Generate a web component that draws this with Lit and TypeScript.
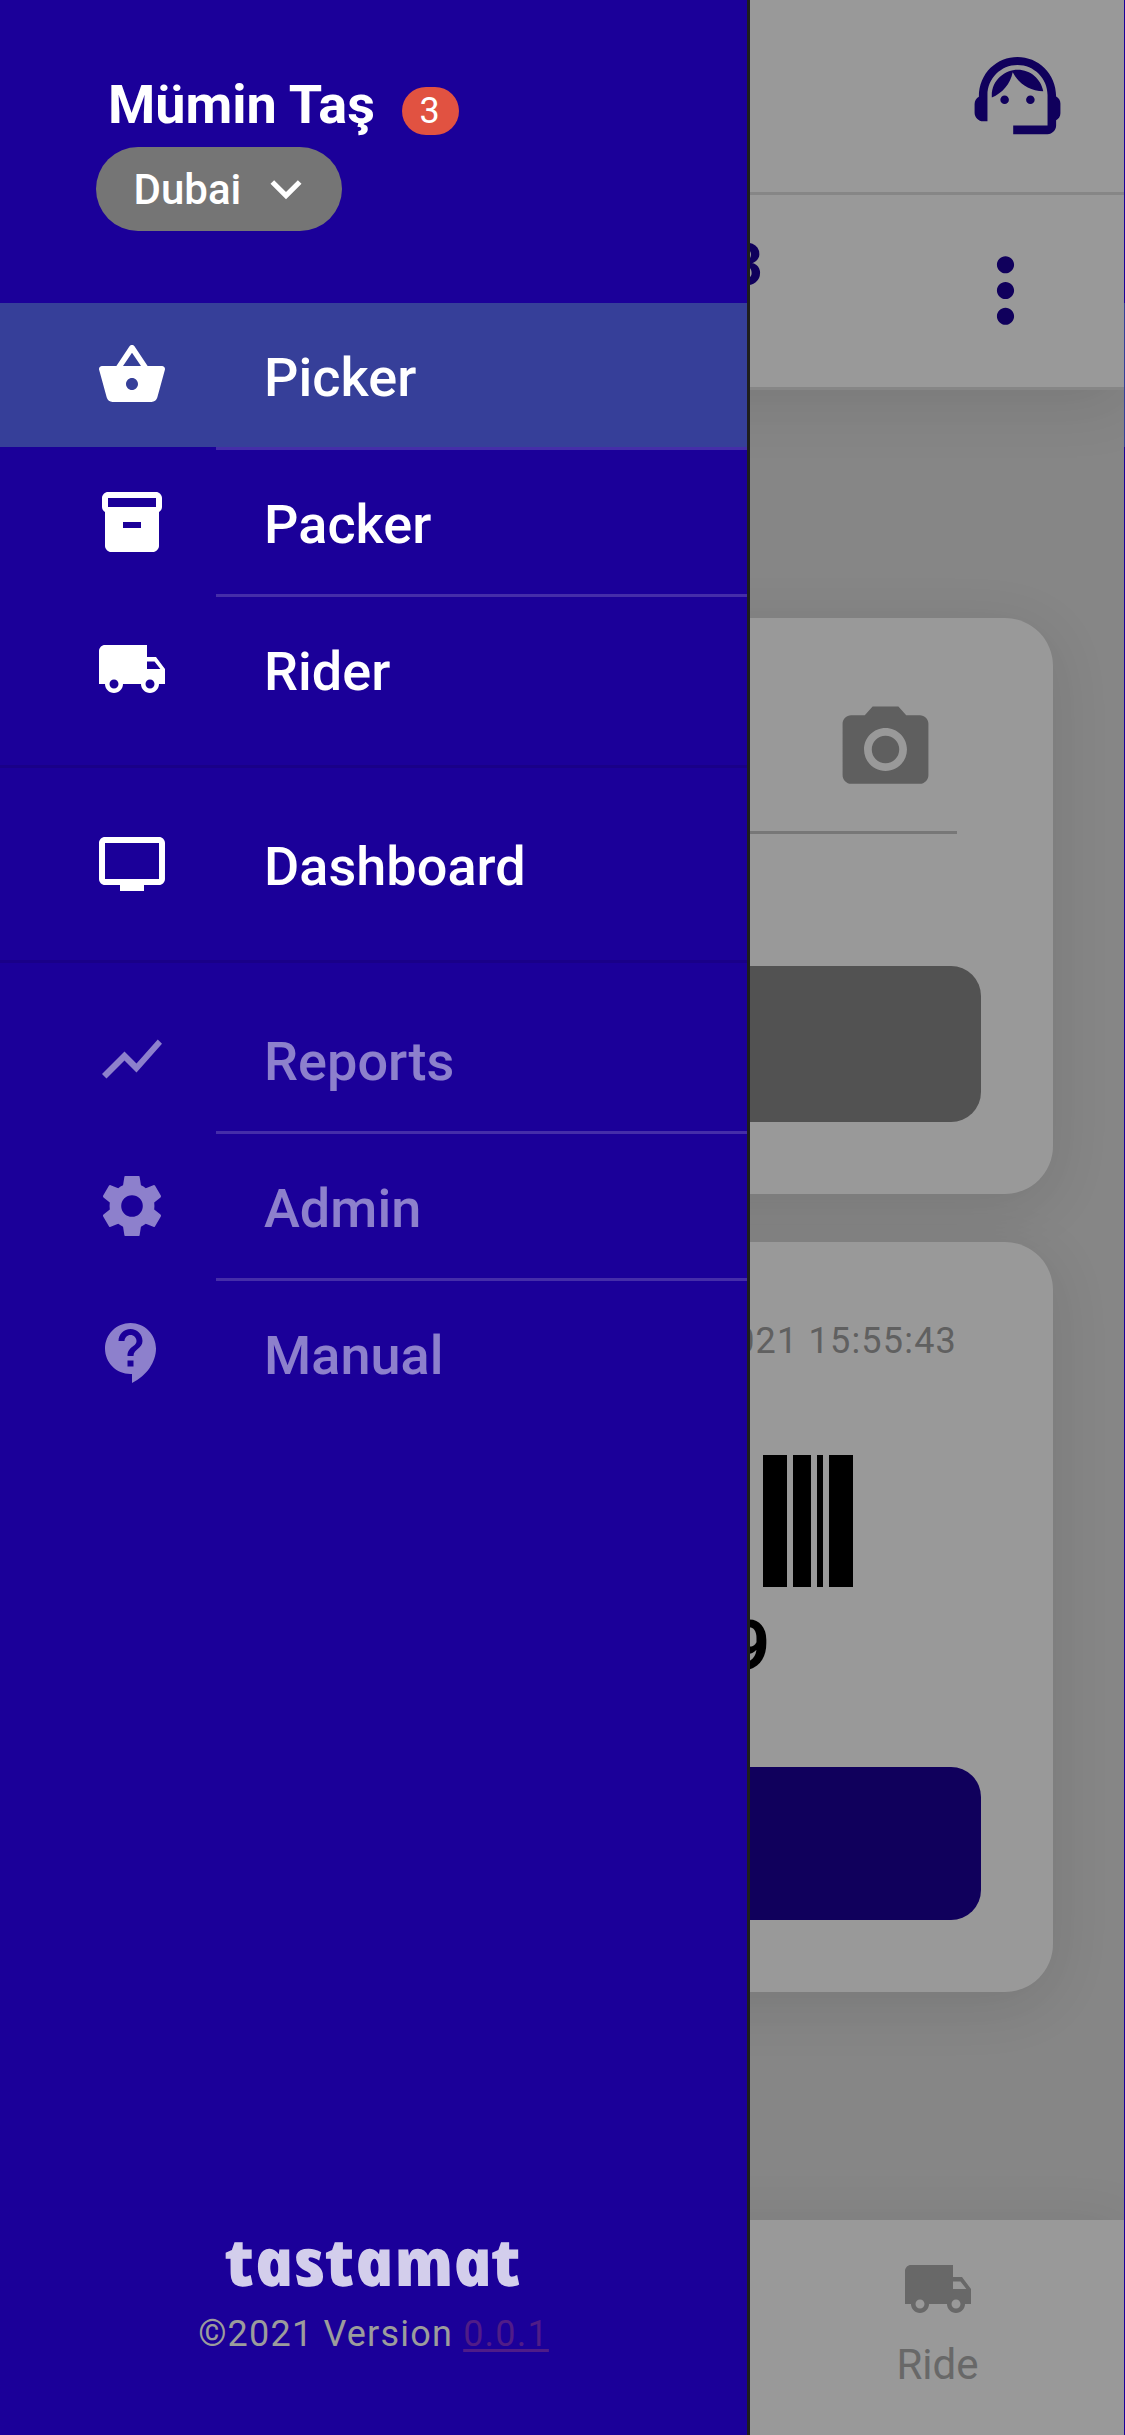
import { LitElement, html, css, svg } from "lit";
import { customElement, property } from "lit/decorators.js";
import { classMap } from "lit/directives/class-map.js";

const ICONS: Record<string, string> = {
  basket:
    "M17.21 9l-4.38-6.56c-.19-.28-.51-.42-.83-.42-.32 0-.64.14-.83.43L6.79 9H2c-.55 0-1 .45-1 1 0 .09.01.18.04.27l2.54 9.27c.23.84 1 1.46 1.92 1.46h13c.92 0 1.69-.62 1.93-1.46l2.54-9.27L23 10c0-.55-.45-1-1-1h-4.79zM9 9l3-4.4L15 9H9zm3 8c-1.1 0-2-.9-2-2s.9-2 2-2 2 .9 2 2-.9 2-2 2z",
  box: "M20 2H4c-1 0-2 .9-2 2v3.01c0 .72.43 1.34 1 1.69V20c0 1.1 1.1 2 2 2h14c.9 0 2-.9 2-2V8.7c.57-.35 1-.97 1-1.69V4c0-1.1-1-2-2-2zm-5 12H9v-2h6v2zm5-7H4V4h16v3z",
  truck:
    "M20 8h-3V4H3c-1.1 0-2 .9-2 2v11h2c0 1.66 1.34 3 3 3s3-1.34 3-3h6c0 1.66 1.34 3 3 3s3-1.34 3-3h2v-5l-3-4zM6 18.5c-.83 0-1.5-.67-1.5-1.5s.67-1.5 1.5-1.5 1.5.67 1.5 1.5-.67 1.5-1.5 1.5zm13.5-9l1.96 2.5H17V9.5h2.5zm-1.5 9c-.83 0-1.5-.67-1.5-1.5s.67-1.5 1.5-1.5 1.5.67 1.5 1.5-.67 1.5-1.5 1.5z",
  screen:
    "M21 3H3c-1.11 0-2 .89-2 2v12c0 1.1.89 2 2 2h5v2h8v-2h5c1.1 0 1.99-.9 1.99-2L23 5c0-1.11-.9-2-2-2zm0 14H3V5h18v12z",
  chart: "M3.5 18.49l6-6.01 4 4L22 6.92l-1.41-1.41-7.09 7.97-4-4L2 16.99z",
  gear: "M9.65 2H14.35Q14.5 2 14.55 2.3L14.98 5.1Q15.85 5.45 16.6 6.05L19.1 5.05Q19.45 4.9 19.65 5.2L21.65 8.6Q21.75 8.9 21.5 9.15L19.4 10.8Q19.55 12 19.4 13.2L21.5 14.85Q21.75 15.1 21.65 15.4L19.65 18.8Q19.45 19.1 19.1 18.95L16.6 17.95Q15.85 18.55 14.98 18.9L14.55 21.7Q14.5 22 14.35 22H9.65Q9.5 22 9.45 21.7L9.02 18.9Q8.15 18.55 7.4 17.95L4.9 18.95Q4.55 19.1 4.35 18.8L2.35 15.4Q2.25 15.1 2.5 14.85L4.6 13.2Q4.45 12 4.6 10.8L2.5 9.15Q2.25 8.9 2.35 8.6L4.35 5.2Q4.55 4.9 4.9 5.05L7.4 6.05Q8.15 5.45 9.02 5.1L9.45 2.3Q9.5 2 9.65 2zM12 8.4a3.6 3.6 0 1 0 0 7.2 3.6 3.6 0 0 0 0-7.2z",
  help: "M11.5 2C6.81 2 3 5.81 3 10.5S6.81 19 11.5 19h.5v3c4.86-2.34 8-7 8-11.5C20 5.81 16.19 2 11.5 2zm1 14.5h-2v-2h2v2zm0-3.5h-2c0-3.25 3-3 3-5 0-1.1-.9-2-2-2s-2 .9-2 2h-2c0-2.21 1.79-4 4-4s4 1.79 4 4c0 2.5-3 2.75-3 5z",
  chevron: "M7.41 8.59L12 13.17l4.59-4.58L18 10l-6 6-6-6 1.41-1.41z",
  agent:
    "M21 12.22C21 6.73 16.74 3 12 3c-4.69 0-9 3.65-9 9.28-.6.34-1 .98-1 1.72v2c0 1.1.9 2 2 2h1v-6.1c0-3.87 3.13-7 7-7s7 3.13 7 7V19h-8v2h8c1.1 0 2-.9 2-2v-1.22c.59-.31 1-.92 1-1.64v-2.3c0-.7-.41-1.31-1-1.62zM10 13a1 1 0 1 1-2 0 1 1 0 0 1 2 0zM16 13a1 1 0 1 1-2 0 1 1 0 0 1 2 0zM18 11.03C17.52 8.18 15.04 6 12.05 6c-3.03 0-6.29 2.51-6.03 6.45 2.47-1.01 4.33-3.21 4.86-5.89 1.31 2.63 4 4.44 7.12 4.47z",
  more: "M12 8c1.1 0 2-.9 2-2s-.9-2-2-2-2 .9-2 2 .9 2 2 2zm0 2c-1.1 0-2 .9-2 2s.9 2 2 2 2-.9 2-2-.9-2-2-2zm0 6c-1.1 0-2 .9-2 2s.9 2 2 2 2-.9 2-2-.9-2-2-2z",
  camera:
    "M12 8.8a3.2 3.2 0 1 0 0 6.4 3.2 3.2 0 0 0 0-6.4zM9 2L7.17 4H4c-1.1 0-2 .9-2 2v12c0 1.1.9 2 2 2h16c1.1 0 2-.9 2-2V6c0-1.1-.9-2-2-2h-3.17L15 2H9zm3 15c-2.76 0-5-2.24-5-5s2.24-5 5-5 5 2.24 5 5-2.24 5-5 5z",
};

@customElement("app-icon")
class AppIcon extends LitElement {
  @property() name = "";
  static styles = css`
    :host {
      display: block;
      flex: none;
      width: 72px;
      height: 72px;
    }
    .glyph {
      display: block;
      width: 100%;
      height: 100%;
      fill: currentColor;
    }
  `;
  render() {
    return html`<svg class="glyph" viewBox="0 0 24 24">${svg`<path d=${ICONS[this.name]}></path>`}</svg>`;
  }
}

interface Item {
  icon: string;
  label: string;
  active?: boolean;
}

@customElement("side-menu")
class SideMenu extends LitElement {
  static styles = css`
    :host {
      display: flex;
      flex-direction: column;
      box-sizing: border-box;
      width: 750px;
      height: 2435px;
      background: #1b0099;
      border-right: 3px solid #1e1e1e;
      color: #fff;
      font-family: Roboto, sans-serif;
    }
    .head {
      box-sizing: border-box;
      height: 303px;
      padding: 72px 0 0 96px;
    }
    .who {
      display: flex;
      height: 75px;
      padding-left: 12px;
    }
    .name {
      font-size: 54px;
      font-weight: 700;
      line-height: 65px;
      width: 294px;
      white-space: nowrap;
    }
    .badge {
      box-sizing: border-box;
      margin-top: 15px;
      width: 57px;
      height: 48px;
      padding-right: 2px;
      border-radius: 24px;
      background: #e15241;
      font-size: 36px;
      line-height: 49px;
      text-align: center;
    }
    .place {
      display: flex;
      align-items: center;
      box-sizing: border-box;
      width: 246px;
      height: 84px;
      padding-left: 37.5px;
      border-radius: 42px;
      background: #757575;
      font-size: 42px;
      font-weight: 500;
    }
    .place-name {
      width: 121.5px;
      padding-top: 2px;
      line-height: 84px;
    }
    .chevron {
      width: 62px;
      height: 62px;
    }
    .group + .group {
      margin-top: 24px;
      padding-top: 24px;
      border-top: 3px solid #190088;
    }
    .faded .row {
      color: rgba(255, 255, 255, 0.5);
    }
    .row {
      display: flex;
      align-items: center;
      gap: 96px;
      height: 144px;
      padding-left: 96px;
    }
    .active {
      background: #363f99;
    }
    .label {
      padding-top: 5px;
      font-size: 54px;
      font-weight: 500;
      line-height: 64px;
      letter-spacing: 0.05px;
    }
    .rule {
      height: 3px;
      margin-left: 216px;
      background: #452da9;
    }
    .foot {
      margin-top: auto;
      height: 205px;
      display: flex;
      flex-direction: column;
      align-items: center;
    }
    .logo {
      display: block;
      width: 296px;
      height: 64px;
      overflow: visible;
      fill: #d3ceec;
      font-family: "Open Sans", sans-serif;
      font-size: 66px;
      font-weight: 800;
      font-style: italic;
    }
    .version {
      margin-top: 18px;
      font-size: 36px;
      line-height: 44px;
      letter-spacing: 1.2px;
      color: #9c9c9c;
      white-space: pre;
    }
    .link {
      color: #501c88;
      text-decoration: underline;
      text-decoration-thickness: 3px;
      text-underline-offset: 3px;
      text-decoration-skip-ink: none;
    }
  `;

  private groups: { faded?: boolean; items: Item[] }[] = [
    {
      items: [
        { icon: "basket", label: "Picker", active: true },
        { icon: "box", label: "Packer" },
        { icon: "truck", label: "Rider" },
      ],
    },
    { items: [{ icon: "screen", label: "Dashboard" }] },
    {
      faded: true,
      items: [
        { icon: "chart", label: "Reports" },
        { icon: "gear", label: "Admin" },
        { icon: "help", label: "Manual" },
      ],
    },
  ];

  render() {
    return html`
      <header class="head">
        <div class="who">
          <div class="name">Mümin Taş</div>
          <div class="badge">3</div>
        </div>
        <div class="place">
          <span class="place-name">Dubai</span>
          <app-icon class="chevron" name="chevron"></app-icon>
        </div>
      </header>
      ${this.groups.map(
        (g) => html`<nav class=${classMap({ group: true, faded: !!g.faded })}>
          ${g.items.map(
            (it, i) => html`
              ${i ? html`<div class="rule"></div>` : ""}
              <div class=${classMap({ row: true, active: !!it.active })}>
                <app-icon name=${it.icon}></app-icon>
                <span class="label">${it.label}</span>
              </div>
            `
          )}
        </nav>`
      )}
      <footer class="foot">
        <svg class="logo" viewBox="0 0 296 64">
          <text x="0" y="56" transform="translate(-8.5 0) skewX(12)" textLength="296" lengthAdjust="spacingAndGlyphs">tastamat</text>
        </svg>
        <div class="version">©2021 Version <span class="link">0.0.1</span></div>
      </footer>
    `;
  }
}

@customElement("picker-page")
class PickerPage extends LitElement {
  static styles = css`
    :host {
      display: flex;
      flex-direction: column;
      width: 1125px;
      height: 2435px;
      background: #dfdfdf;
      font-family: Roboto, sans-serif;
      --soft: 0 12px 60px rgba(0, 0, 0, 0.1);
    }
    .top {
      background: #fff;
      color: #1b0099;
      box-shadow: var(--soft);
    }
    .bar {
      display: flex;
      align-items: center;
      justify-content: flex-end;
      height: 192px;
      border-bottom: 3px solid #dfdfdf;
    }
    .large {
      width: 103px;
      height: 103px;
    }
    .support {
      margin: 0 56px 1px 0;
    }
    .title {
      width: 763px;
      padding-bottom: 53px;
      font-size: 60px;
      font-weight: 700;
      text-align: right;
    }
    .menu {
      margin: 0 68px 2px auto;
    }
    .content {
      display: flex;
      flex-direction: column;
      gap: 48px;
      padding: 228px 72px 0;
    }
    .card {
      box-sizing: border-box;
      padding: 0 72px;
      border-radius: 48px;
      background: #fff;
      box-shadow: var(--soft);
    }
    .scan {
      height: 576px;
    }
    .field {
      display: flex;
      justify-content: flex-end;
      box-sizing: border-box;
      height: 216px;
      margin: 0 24px 132px;
      padding: 80px 20px 0 0;
      border-bottom: 3px solid #c6c6c6;
      color: #9e9e9e;
    }
    .button {
      height: 156px;
      border-radius: 30px;
      background: #898989;
    }
    .order {
      height: 750px;
    }
    .date {
      height: 213px;
      box-sizing: border-box;
      padding: 77px 24px 0 0;
      font-size: 36px;
      line-height: 44px;
      letter-spacing: 1.2px;
      text-align: right;
      color: #a0a0a0;
    }
    .bars {
      display: flex;
      justify-content: flex-end;
      gap: 6px;
      height: 132px;
      padding-right: 128px;
    }
    .b1 {
      width: 6px;
      background: #000;
    }
    .b3 {
      width: 18px;
      background: #000;
    }
    .b4 {
      width: 24px;
      background: #000;
    }
    .code {
      box-sizing: border-box;
      width: 626px;
      height: 180px;
      padding-top: 19px;
      font-size: 70px;
      font-weight: 700;
      line-height: 80px;
      text-align: right;
    }
    .primary {
      height: 153px;
      background: #1b0099;
    }
    .tabs {
      display: flex;
      justify-content: flex-end;
      height: 215px;
      margin-top: auto;
      background: #fff;
      box-shadow: var(--soft);
    }
    .tab {
      display: flex;
      flex-direction: column;
      align-items: center;
      width: 375px;
      padding-top: 33px;
      color: #adadad;
      font-size: 42px;
      line-height: 50px;
    }
    .tab-label {
      margin-top: 15px;
    }
  `;
  render() {
    return html`
      <header class="top">
        <div class="bar"><app-icon class="large support" name="agent"></app-icon></div>
        <div class="bar">
          <div class="title">3</div>
          <app-icon class="large menu" name="more"></app-icon>
        </div>
      </header>
      <main class="content">
        <section class="card scan">
          <div class="field"><app-icon class="large" name="camera"></app-icon></div>
          <div class="button"></div>
        </section>
        <section class="card order">
          <div class="date">2021 15:55:43</div>
          <div class="bars">
            <i class="b4"></i><i class="b3"></i><i class="b1"></i><i class="b4"></i>
          </div>
          <div class="code">9</div>
          <div class="button primary"></div>
        </section>
      </main>
      <footer class="tabs">
        <div class="tab">
          <app-icon name="truck"></app-icon>
          <span class="tab-label">Ride</span>
        </div>
      </footer>
    `;
  }
}

@customElement("app-root")
class AppRoot extends LitElement {
  static styles = css`
    :host {
      display: block;
      position: relative;
      width: 1125px;
      height: 2435px;
      overflow: hidden;
    }
    .scrim {
      position: absolute;
      inset: 0;
      background: rgba(0, 0, 0, 0.4);
    }
    .drawer {
      position: absolute;
      top: 0;
      left: 0;
    }
    .edge {
      position: absolute;
      top: 0;
      right: 0;
      width: 1px;
      height: 100%;
      background: linear-gradient(#1b0099 303px, #363f99 303px 447px, #1b0099 447px);
    }
  `;
  render() {
    return html`
      <picker-page></picker-page>
      <div class="scrim"></div>
      <side-menu class="drawer"></side-menu>
      <div class="edge"></div>
    `;
  }
}
